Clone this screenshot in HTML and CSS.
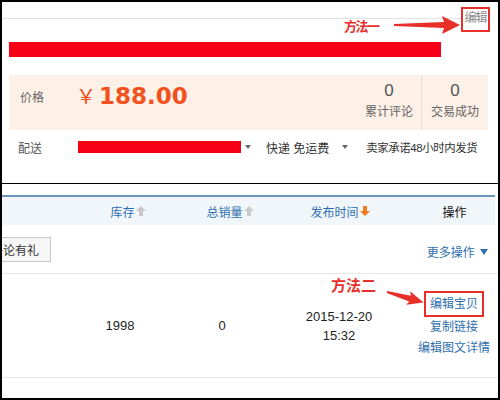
FILE: index.html
```html
<!DOCTYPE html>
<html lang="zh-CN">
<head>
    <meta charset="UTF-8">
    <title>编辑宝贝</title>
    <link rel="stylesheet" href="styles.css">
</head>
<body>
    <div class="frame">
        <section class="item-top">
            <div class="topbar">
                <div class="rule"></div>
                <span class="edit-box">编辑</span>
            </div>
            <div class="title-mask"></div>
            <div class="price-box">
                <span class="label">价格</span>
                <span class="price"><em>￥</em>188.00</span>
                <div class="stats">
                    <div class="stat"><b>0</b><span>累计评论</span></div>
                    <div class="stat"><b>0</b><span>交易成功</span></div>
                </div>
            </div>
            <div class="ship">
                <span class="label">配送</span>
                <span class="addr-mask"></span>
                <i class="caret"></i>
                <span class="ship-type">快递 免运费</span>
                <i class="caret"></i>
                <span class="promise">卖家承诺48小时内发货</span>
            </div>
            <div class="note note-one">方法一</div>
            <svg class="arrow arrow-one" width="66" height="18" viewBox="0 0 66 18">
                <polygon points="0,8 50,6 48,0 66,9 48,18 50,12 0,10" fill="#e8302b"/>
            </svg>
        </section>

        <section class="list">
            <div class="thead">
                <span></span>
                <span class="sort">库存<svg width="10" height="10" viewBox="0 0 10 10"><polygon points="5,0 10,5 7,5 7,10 3,10 3,5 0,5" fill="#c9c9c9"/></svg></span>
                <span class="sort">总销量<svg width="10" height="10" viewBox="0 0 10 10"><polygon points="5,0 10,5 7,5 7,10 3,10 3,5 0,5" fill="#c9c9c9"/></svg></span>
                <span class="sort">发布时间<svg width="10" height="10" viewBox="0 0 10 10"><polygon points="3,0 7,0 7,5 10,5 5,10 0,5 3,5" fill="#f47c20"/></svg></span>
                <span class="ops">操作</span>
            </div>
            <div class="toolbar">
                <button class="btn">评论有礼</button>
                <a class="more">更多操作 <i class="caret-blue"></i></a>
            </div>
            <div class="row">
                <span></span>
                <span class="cell num">1998</span>
                <span class="cell num">0</span>
                <span class="cell date">2015-12-20<br>15:32</span>
                <div class="cell actions">
                    <a class="edit-link">编辑宝贝</a>
                    <a>复制链接</a>
                    <a>编辑图文详情</a>
                </div>
            </div>
            <div class="note note-two">方法二</div>
            <svg class="arrow arrow-two" width="44" height="28" viewBox="0 0 44 28">
                <g transform="translate(2,8) rotate(16)">
                    <polygon points="0,-1 24,-3 22,-7 38,0 22,7 24,3 0,1" fill="#e8302b"/>
                </g>
            </svg>
        </section>
    </div>
</body>
</html>
```

FILE: styles.css
```css
body {
    margin: 0;
    background: #fff;
    font-family: "Liberation Sans", "Noto Sans CJK SC", sans-serif;
    font-size: 12px;
    color: #333;
}

.frame {
    width: 500px;
    height: 400px;
    box-sizing: border-box;
    border: 2px solid #000;
    overflow: hidden;
}

/* top screenshot: item detail */
.item-top {
    position: relative;
    height: 181px;
    border-bottom: 1px solid #000;
}

.topbar {
    display: flex;
    align-items: flex-start;
    height: 40px;
}

.rule {
    flex: 1;
    height: 16px;
    border-bottom: 1px solid #e2e2e2;
}

.edit-box {
    margin: 5px 8px 0 0;
    width: 25px;
    height: 21px;
    border: 2px solid #e8302b;
    color: #8a8a8a;
    line-height: 19px;
    text-align: center;
    letter-spacing: -1px;
}

.title-mask {
    margin-left: 7px;
    width: 432px;
    height: 15px;
    background: #f60018;
}

.price-box {
    display: flex;
    align-items: flex-start;
    margin: 18px 10px 0 7px;
    height: 55px;
    background: #fdf0e6;
}

.price-box .label {
    width: 56px;
    margin-top: 15px;
    padding-left: 11px;
    color: #666;
    line-height: 16px;
}

.price {
    margin-top: 6px;
    color: #f2501c;
    font-family: "DejaVu Sans", sans-serif;
    font-weight: bold;
    font-size: 23px;
    line-height: 30px;
}

.price em {
    font-style: normal;
    font-weight: normal;
    font-size: 20px;
    margin-right: 3px;
}

.stats {
    display: flex;
    margin-left: auto;
    align-self: stretch;
}

.stat {
    display: flex;
    flex-direction: column;
    align-items: center;
    width: 64px;
    padding-top: 6px;
    color: #666;
}

.stat + .stat {
    width: 66px;
    border-left: 1px solid #f6dccb;
}

.stat b {
    font-weight: normal;
    font-size: 17px;
    line-height: 20px;
    color: #555;
}

.stat span {
    margin-top: 2px;
    line-height: 18px;
}

.ship {
    display: flex;
    align-items: center;
    height: 18px;
    margin-top: 8px;
    padding-left: 16px;
}

.ship .label {
    width: 60px;
    color: #555;
}

.addr-mask {
    width: 163px;
    height: 12px;
    background: #f60018;
}

.caret {
    margin-left: 4px;
    border-left: 3.5px solid transparent;
    border-right: 3.5px solid transparent;
    border-top: 4px solid #666;
}

.ship-type {
    margin: 0 9px 0 15px;
}

.promise {
    margin-left: 18px;
    font-size: 11.4px;
    letter-spacing: -0.4px;
}

/* annotations drawn over the screenshots */
.note {
    position: absolute;
    color: #e8302b;
    font-weight: bold;
    font-family: "Noto Sans CJK SC", sans-serif;
}

.note-one {
    left: 342px;
    top: 15px;
    font-size: 13px;
    line-height: 18px;
    letter-spacing: -1.5px;
}

.arrow {
    position: absolute;
}

.arrow-one {
    left: 392px;
    top: 14px;
}

/* bottom screenshot: item list */
.list {
    position: relative;
    height: 213px;
    padding-top: 11px;
    box-sizing: border-box;
}

.thead,
.row {
    display: grid;
    grid-template-columns: 78px 96px 108px 112px 1fr;
}

.thead {
    margin-right: 3px;
    height: 28px;
    align-items: center;
    border-top: 2px solid #6d96bb;
    background: #f1f6fb;
    color: #2f6fae;
}

.sort {
    display: flex;
    align-items: center;
    justify-content: center;
    gap: 1px;
}

.ops {
    padding-left: 18px;
    text-align: center;
    color: #111;
}

.toolbar {
    display: flex;
    justify-content: space-between;
    height: 48px;
    border-bottom: 1px solid #e6e6e6;
}

.btn {
    margin: 12px 0 0 -22px;
    height: 25px;
    padding: 0 11px 0 10px;
    border: 1px solid #c8c8c8;
    background: #f6f6f6;
    color: #333;
    font-family: inherit;
    font-size: 12px;
}

.more {
    align-self: flex-end;
    margin: 0 10px 12px 0;
    color: #2f6fae;
    line-height: 16px;
}

.caret-blue {
    display: inline-block;
    margin-left: 2px;
    border-left: 4px solid transparent;
    border-right: 4px solid transparent;
    border-top: 6px solid #2f6fae;
    vertical-align: 2px;
}

.row {
    height: 103px;
    border-bottom: 1px solid #e6e6e6;
    align-items: center;
}

.cell {
    text-align: center;
    color: #222;
}

.num {
    padding-right: 16px;
    font-size: 13px;
}

.date {
    font-size: 13px;
    line-height: 19px;
    padding-right: 2px;
}

.actions {
    align-self: start;
    display: flex;
    flex-direction: column;
    align-items: center;
    padding: 17px 0 0 14px;
    line-height: 21px;
}

.actions a {
    color: #2f6fae;
}

.actions .edit-link {
    padding: 2px 4px;
    line-height: 18px;
    border: 2px solid #e8302b;
}

.note-two {
    left: 329px;
    top: 91px;
    font-size: 15px;
    line-height: 20px;
}

.arrow-two {
    left: 383px;
    top: 100px;
}
```
